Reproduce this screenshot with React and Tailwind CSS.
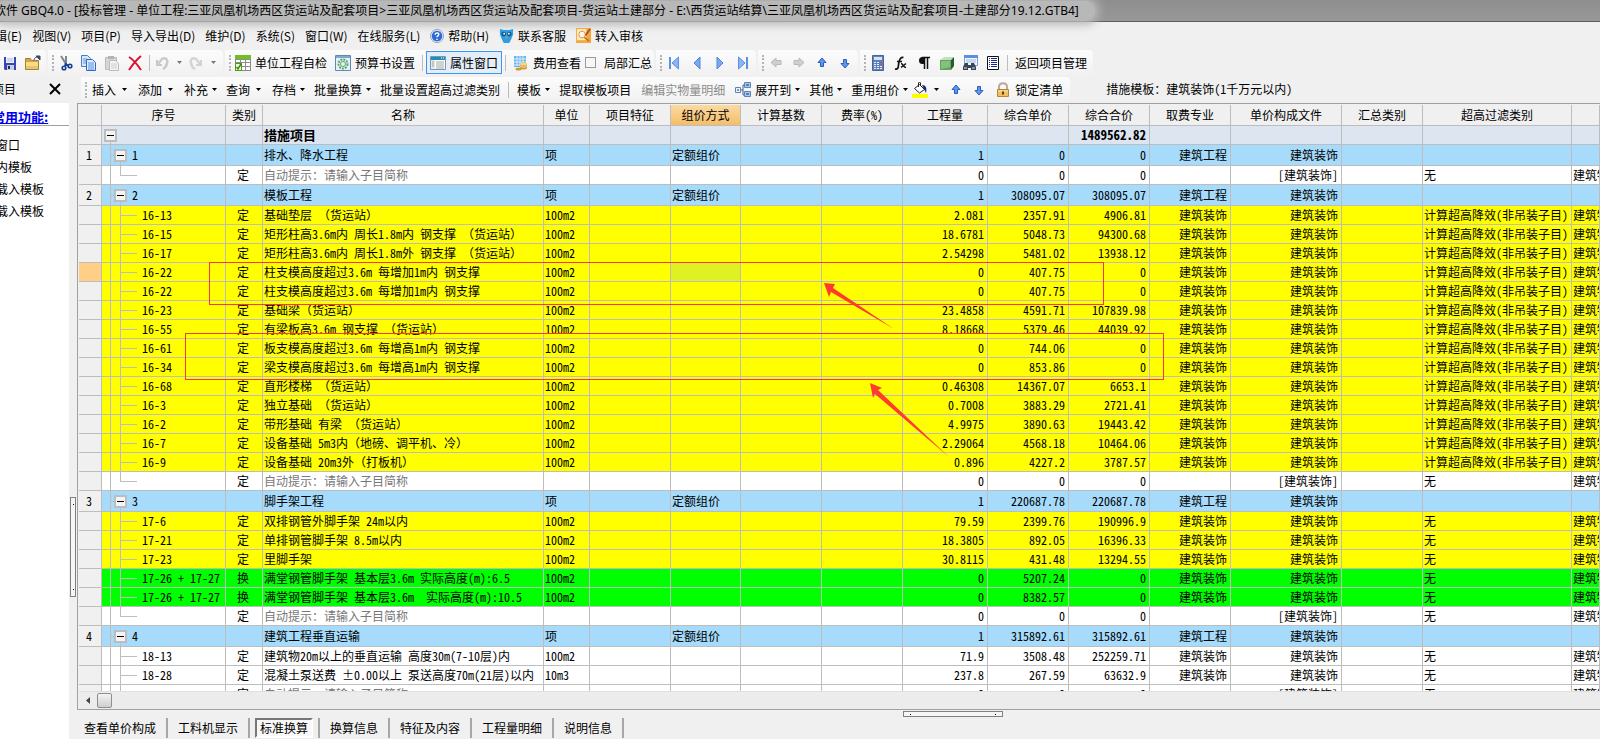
import clsx from "clsx";

const COLUMNS = [
  { key: "no", label: "", width: "w-[23px]", align: "text-center" },
  { key: "code", label: "序号", width: "w-[124px]", align: "text-left" },
  { key: "type", label: "类别", width: "w-[37px]", align: "text-center" },
  { key: "name", label: "名称", width: "w-[281px]", align: "text-left" },
  { key: "unit", label: "单位", width: "w-[46px]", align: "text-left" },
  { key: "feature", label: "项目特征", width: "w-[81px]", align: "text-left" },
  { key: "method", label: "组价方式", width: "w-[70px]", align: "text-left" },
  { key: "base", label: "计算基数", width: "w-[81px]", align: "text-left" },
  { key: "rate", label: "费率(%)", width: "w-[81px]", align: "text-left" },
  { key: "qty", label: "工程量", width: "w-[85px]", align: "text-right" },
  { key: "price", label: "综合单价", width: "w-[81px]", align: "text-right" },
  { key: "total", label: "综合合价", width: "w-[81px]", align: "text-right" },
  { key: "major", label: "取费专业", width: "w-[81px]", align: "text-right" },
  { key: "file", label: "单价构成文件", width: "w-[111px]", align: "text-right" },
  { key: "summary", label: "汇总类别", width: "w-[81px]", align: "text-left" },
  { key: "filter", label: "超高过滤类别", width: "w-[149px]", align: "text-left" },
  { key: "rest", label: "", width: "", align: "text-left" },
];

const HIGH = "计算超高降效(非吊装子目)";

const group = (no, name, price) => ({
  kind: "group", no, code: no, name, unit: "项", method: "定额组价",
  qty: "1", price, total: price, major: "建筑工程", file: "建筑装饰",
});

const item = (code, name, qty, price, total, color, extra) => ({
  kind: "item", code, type: "定", name, unit: "100m2", qty, price, total, color,
  major: "建筑装饰", file: "建筑装饰", filter: HIGH, rest: "建筑物超高", ...extra,
});

const hint = () => ({
  kind: "hint", type: "定", name: "自动提示：请输入子目简称", qty: "0", price: "0",
  total: "0", file: "[建筑装饰]", filter: "无", rest: "建筑物超高",
});

const YELLOW = "bg-[#ffff00]";
const GREEN = "bg-[#00ff00]";
const none = { filter: "无" };

const ROWS = [
  { kind: "root", name: "措施项目", total: "1489562.82" },
  group("1", "排水、降水工程", "0"),
  hint(),
  group("2", "模板工程", "308095.07"),
  item("16-13", "基础垫层 （货运站）", "2.081", "2357.91", "4906.81", YELLOW),
  item("16-15", "矩形柱高3.6m内 周长1.8m内 钢支撑 （货运站）", "18.6781", "5048.73", "94300.68", YELLOW),
  item("16-17", "矩形柱高3.6m内 周长1.8m外 钢支撑 （货运站）", "2.54298", "5481.02", "13938.12", YELLOW),
  item("16-22", "柱支模高度超过3.6m 每增加1m内 钢支撑", "0", "407.75", "0", YELLOW, { selected: true }),
  item("16-22", "柱支模高度超过3.6m 每增加1m内 钢支撑", "0", "407.75", "0", YELLOW),
  item("16-23", "基础梁（货运站）", "23.4858", "4591.71", "107839.98", YELLOW),
  item("16-55", "有梁板高3.6m 钢支撑 （货运站）", "8.18668", "5379.46", "44039.92", YELLOW),
  item("16-61", "板支模高度超过3.6m 每增高1m内 钢支撑", "0", "744.06", "0", YELLOW),
  item("16-34", "梁支模高度超过3.6m 每增高1m内 钢支撑", "0", "853.86", "0", YELLOW),
  item("16-68", "直形楼梯 （货运站）", "0.46308", "14367.07", "6653.1", YELLOW),
  item("16-3", "独立基础 （货运站）", "0.7008", "3883.29", "2721.41", YELLOW),
  item("16-2", "带形基础 有梁 （货运站）", "4.9975", "3890.63", "19443.42", YELLOW),
  item("16-7", "设备基础 5m3内（地磅、调平机、冷）", "2.29064", "4568.18", "10464.06", YELLOW),
  item("16-9", "设备基础 20m3外（打板机）", "0.896", "4227.2", "3787.57", YELLOW),
  hint(),
  group("3", "脚手架工程", "220687.78"),
  item("17-6", "双排钢管外脚手架 24m以内", "79.59", "2399.76", "190996.9", YELLOW, none),
  item("17-21", "单排钢管脚手架 8.5m以内", "18.3805", "892.05", "16396.33", YELLOW, none),
  item("17-23", "里脚手架", "30.8115", "431.48", "13294.55", YELLOW, none),
  item("17-26 + 17-27", "满堂钢管脚手架 基本层3.6m 实际高度(m):6.5", "0", "5207.24", "0", GREEN, { ...none, type: "换" }),
  item("17-26 + 17-27", "满堂钢管脚手架 基本层3.6m  实际高度(m):10.5", "0", "8382.57", "0", GREEN, { ...none, type: "换" }),
  hint(),
  group("4", "建筑工程垂直运输", "315892.61"),
  item("18-13", "建筑物20m以上的垂直运输 高度30m(7-10层)内", "71.9", "3508.48", "252259.71", "bg-white", none),
  item("18-28", "混凝土泵送费 ±0.00以上 泵送高度70m(21层)以内", "237.8", "267.59", "63632.9", "bg-white", { ...none, unit: "10m3" }),
  hint(),
];

/* ---------- icons ---------- */

function Icon({ children, size = 16 }) {
  return (
    <svg width={size} height={size} viewBox="0 0 16 16" fill="none" className="shrink-0" aria-hidden="true">
      {children}
    </svg>
  );
}

const Caret = ({ color = "#000" }) => (
  <svg width="5" height="3" viewBox="0 0 5 3" className="shrink-0" aria-hidden="true">
    <path d="M0 0h5L2.5 3z" fill={color} />
  </svg>
);

const SaveIcon = () => (
  <Icon>
    <path d="M2 2h12v13H3l-1-1z" fill="#3a45b4" />
    <path d="M4 2h8v6H4z" fill="#eef1fb" />
    <path d="M5 4h6M5 6h6" stroke="#b4bede" />
    <path d="M5 10h7v5H5z" fill="#c9cede" />
    <path d="M6 11h2v3H6z" fill="#1c2670" />
  </Icon>
);

const FolderIcon = () => (
  <Icon>
    <path d="M.5 3.500h5l1 2h7v9H.500z" fill="#d9a440" stroke="#a5823c" />
    <path d="M1 7h12v7H1z" fill="#f7dc8a" />
    <path d="M1 11h12v3H1z" fill="#ecc566" />
    <path d="M9 5c0-2 2-3 4-3M11 1h4v4z" stroke="#3c4a68" />
    <path d="M11 1h4v4z" fill="#3c4a68" />
  </Icon>
);

const CutIcon = () => (
  <Icon>
    <path d="M3 1l5 8M8 1L8 9" stroke="#7b8794" strokeWidth="2" />
    <path d="M7 9l4 2M8 8l-1 3" stroke="#173f96" strokeWidth="2" />
    <circle cx="6" cy="13" r="1.800" stroke="#173f96" strokeWidth="1.600" />
    <circle cx="12" cy="11" r="1.800" stroke="#173f96" strokeWidth="1.600" />
  </Icon>
);

const CopyIcon = () => (
  <Icon>
    <path d="M.5.500h6l3 3v8h-9z" fill="#d6e6fb" stroke="#4a7cc8" />
    <path d="M2 4h4M2 6h4M2 8h4" stroke="#6c98d8" />
    <path d="M5.500 4.500h6l3 3v8h-9z" fill="#dcebfd" stroke="#2f68bc" />
    <path d="M7 8h6M7 10h6M7 12h6M7 14h6" stroke="#5f92d8" />
  </Icon>
);

const PasteIcon = () => (
  <Icon>
    <path d="M1.500 2.500h11v12h-11z" fill="#d6d6d6" stroke="#bcbcbc" />
    <path d="M4 1h6v3H4z" fill="#b4b4b4" />
    <path d="M5.500 5.500h6l3 3v7h-9z" fill="#f4f4f4" stroke="#bcbcbc" />
    <path d="M7 9h6M7 11h6M7 13h6" stroke="#cecece" />
  </Icon>
);

const DeleteIcon = () => (
  <Icon>
    <path d="M2 2c5 3 8 7 12 13M14 1C9 5 6 9 2 15" stroke="#d8142c" strokeWidth="2" />
  </Icon>
);

const UndoIcon = () => (
  <Icon>
    <path d="M3 5v5h5" stroke="#c8c8c8" strokeWidth="2" />
    <path d="M4 9l4-5c4-2 6 1 5 4-.5 3-2 5-4 6" stroke="#cacaca" strokeWidth="2.500" />
  </Icon>
);

const RedoIcon = () => (
  <Icon>
    <path d="M13 5v5H8" stroke="#d2d2d2" strokeWidth="2" />
    <path d="M12 9L8 4C4 2 2 5 3 8c.5 3 2 5 4 6" stroke="#d4d4d4" strokeWidth="2.500" />
  </Icon>
);

const CheckTableIcon = () => (
  <Icon>
    <path d="M0 0h16v4H0z" fill="#72bf22" />
    <path d="M0 4h16v12H0z" fill="#8c8c8c" />
    <path d="M1 5h4v2H1zM6 5h4v2H6zM11 5h4v2h-4zM7 8h3v3H7zM11 8h4v3h-4zM7 12h3v3H7zM11 12h4v3h-4z" fill="#fff" />
    <path d="M0 8h7v8H0z" fill="#4f9a18" />
    <path d="M1 9h5v6H1z" fill="#eef8e0" />
    <path d="M1.500 12l1.500 2 3-5" stroke="#3c8c10" strokeWidth="1.500" />
  </Icon>
);

const GearIcon = () => (
  <Icon>
    <path d="M.5.500h15v15H.500z" fill="#e4f0fa" stroke="#5d89b4" />
    <path d="M1 1h14v2H1z" fill="#7ea8d0" />
    <circle cx="8" cy="9" r="4.500" stroke="#62a86a" strokeWidth="2" strokeDasharray="2 1" />
    <circle cx="8" cy="9" r="2.500" stroke="#62a86a" />
  </Icon>
);

const PropIcon = () => (
  <Icon>
    <path d="M.5 1.500h15v13H.500z" fill="#fff" stroke="#7c98b0" />
    <path d="M1 2h14v3H1z" fill="#1f8fb8" />
    <path d="M11 3h1M13 3h1" stroke="#fff" />
    <path d="M1 5h4v9H1z" fill="#e4e8ec" />
    <path d="M2 7h2M2 9h2M2 11h2M6 7h8M6 9h8M6 11h8M6 13h8" stroke="#9aa8a4" />
  </Icon>
);

const CostIcon = () => (
  <Icon>
    <path d="M1 1h12v11H1z" fill="#62b4ea" />
    <path d="M1 4h12M1 7h12M1 10h6M4 1v10M7 1v10M10 1v7" stroke="#dcf0fe" />
    <path d="M7 9c0-2 7-2 7 0v4c0 2-7 2-7 0z" fill="#d69a3c" />
    <path d="M7 11c2 1.500 5 1.500 7 0" stroke="#fbe0a0" />
    <ellipse cx="10.500" cy="9" rx="3.500" ry="1.500" fill="#f8d98a" />
    <ellipse cx="5.500" cy="14" rx="3" ry="1.500" fill="#d6953a" />
  </Icon>
);

const FirstIcon = () => (
  <Icon>
    <path d="M4 2v12" stroke="#5c90e0" strokeWidth="2" />
    <path d="M12.500 2v12L6 8z" fill="#8ab4f4" stroke="#5c90e0" />
  </Icon>
);
const PrevIcon = () => <Icon><path d="M11 2v12L5 8z" fill="#7ba9f0" stroke="#4f86dc" /></Icon>;
const NextIcon = () => <Icon><path d="M5 2v12l6-6z" fill="#7ba9f0" stroke="#4f86dc" /></Icon>;
const LastIcon = () => (
  <Icon>
    <path d="M12 2v12" stroke="#5c90e0" strokeWidth="2" />
    <path d="M3.500 2v12l6.500-6z" fill="#8ab4f4" stroke="#5c90e0" />
  </Icon>
);

const LeftIcon = () => <Icon><path d="M3 7.500L8 3v2.500h5v4H8V12z" fill="#cfcfcf" stroke="#b8b8b8" /></Icon>;
const RightIcon = () => <Icon><path d="M13 7.500L8 3v2.500H3v4h5V12z" fill="#cfcfcf" stroke="#b8b8b8" /></Icon>;
const UpIcon = () => <Icon><path d="M8 3L4 7.500h2.500v4h3v-4H12z" fill="#5c97f4" stroke="#2c5cb8" /></Icon>;
const DownIcon = () => <Icon><path d="M8 13l4-4.500H9.500v-4h-3v4H4z" fill="#5c97f4" stroke="#2c5cb8" /></Icon>;

const CalcIcon = () => (
  <Icon>
    <path d="M2.500.500h11v15h-11z" fill="#5f80bc" stroke="#4a6498" />
    <path d="M4 2h8v3H4z" fill="#cfe4f4" />
    <path d="M4 7h2v1H4zM7 7h2v1H7zM4 9h2v1H4zM7 9h2v1H7zM4 11h2v1H4zM7 11h2v1H7zM4 13h2v1H4zM7 13h2v1H7zM10 11h2v1h-2zM10 13h2v1h-2z" fill="#e8f0fb" />
    <path d="M10 7h2v1h-2zM10 9h2v1h-2z" fill="#e04a3a" />
  </Icon>
);

const FxIcon = () => (
  <Icon>
    <path d="M2 14c4 1 3-3 4-7s2-5 4.500-4.500M4 6.500h5" stroke="#111" strokeWidth="1.700" />
    <path d="M8 8.500c2 0 2 4 5 4M13 8.500l-5 4" stroke="#111" strokeWidth="1.500" />
  </Icon>
);

const PilcrowIcon = () => (
  <Icon>
    <path d="M8.500 2v12M11.500 2v12M6 2.500h8" stroke="#111" strokeWidth="1.500" />
    <path d="M8 2H6.500a3.500 3.500 0 000 7H8z" fill="#111" />
  </Icon>
);

const CubeIcon = () => (
  <Icon>
    <path d="M1 5l4-3h10l-3 3z" fill="#bfe2bc" />
    <path d="M1 5h11v10H1z" fill="#5fa65c" />
    <path d="M12 5l3-3v9l-3 4z" fill="#2a5a30" />
    <path d="M2 6h9v6l-9 2z" fill="#84c07e" />
  </Icon>
);

const FindTableIcon = () => (
  <Icon>
    <path d="M2.500.500h13v10h-13z" fill="#f2f7fd" stroke="#7ba2dc" />
    <path d="M2 0h14v3H2z" fill="#5a90e0" />
    <path d="M4 5h10M4 7h10" stroke="#9ab6dc" />
    <path d="M3 8h3v2h3V8h3l2 4v3H9v-2H6v2H1v-3z" fill="#3a4452" />
    <path d="M2 12h3v2H2zM10 12h3v2h-3z" fill="#7e93b0" />
  </Icon>
);

const ListIcon = () => (
  <Icon>
    <path d="M2.500 1.500h11v13h-11z" fill="#fff" stroke="#111" />
    <path d="M4 3.500h1M4 5.500h1M4 7.500h1M4 9.500h1M4 11.500h1M6 3.500h6M6 5.500h6M6 7.500h6M6 9.500h6M6 11.500h6" stroke="#1a2390" />
  </Icon>
);

const HelpIcon = () => (
  <Icon size={14}>
    <circle cx="8" cy="8" r="7.500" fill="#dfe5f0" stroke="#8f9db4" />
    <circle cx="8" cy="8" r="6" fill="#2f68d8" />
    <path d="M6 6.500c0-3 4.500-2.500 4 0C9.700 8 8 7.800 8 9.500M8 11v1.500" stroke="#fff" strokeWidth="1.700" />
  </Icon>
);

const ServiceIcon = () => (
  <Icon size={15}>
    <path d="M1 1l4 1h6l4-1v6l-2 5-2 4H5l-2-4-2-5z" fill="#2c9fe4" />
    <circle cx="5" cy="6.500" r="2.500" fill="#12598c" />
    <circle cx="11" cy="6.500" r="2.500" fill="#12598c" />
    <circle cx="5.500" cy="6" r="1" fill="#fff" />
    <circle cx="10.500" cy="6" r="1" fill="#fff" />
    <path d="M7 9h2v2H7z" fill="#f08040" />
  </Icon>
);

const AuditIcon = () => (
  <Icon size={15}>
    <path d="M0 0h16v16H0z" fill="#f4a83c" />
    <path d="M1 1h10v12H1z" fill="#fbe9c4" />
    <circle cx="6.500" cy="7" r="3.500" fill="#fffaf0" stroke="#d89040" />
    <path d="M9 10l5 4" stroke="#c87020" strokeWidth="2" />
    <path d="M15 1l-5 7" stroke="#b0501c" strokeWidth="2" />
  </Icon>
);

const ExpandIcon = () => (
  <Icon>
    <path d="M6 8h2M8 3v10M8 3h2M8 13h2" stroke="#44608c" />
    <path d="M.5 5.500h5v5h-5z" fill="#eef4fc" stroke="#5c82bc" />
    <path d="M9.500.500h6v5h-6zM9.500 9.500h6v5h-6z" fill="#a8c8f4" stroke="#5c82bc" />
    <path d="M2 8h2M11 3h3M11 12h3" stroke="#17356c" />
  </Icon>
);

const FillIcon = () => (
  <Icon>
    <path d="M0 12h16v4H0z" fill="#ffff00" />
    <path d="M2.500 6.500l5-4 5 5-5 3.500z" fill="#fff" stroke="#222" />
    <path d="M6.500 5V1c0-1 2-1 2 0v3" stroke="#222" />
    <path d="M10 3c4 0 5 3 4 8l-2-4z" fill="#1a2a80" />
  </Icon>
);

const LockIcon = () => (
  <Icon>
    <path d="M4 8V5c0-5 8-5 8 0v3" stroke="#b4ac98" strokeWidth="2" />
    <path d="M2.500 7.500h11v7h-11z" fill="#f0c060" stroke="#b8862e" />
    <path d="M3 9h10" stroke="#fae4ae" />
    <path d="M8 9.500v3" stroke="#5c3c08" strokeWidth="2" />
  </Icon>
);

/* ---------- toolbar parts ---------- */

function Segment({ children, grip = true }) {
  return (
    <div className="flex h-[25px] items-center rounded-r bg-linear-to-b from-[#fcfcfc] to-[#f1f1f1] pr-0.5">
      {grip && <span className="ml-1 h-4 border-l-2 border-dotted border-[#b4b4b4]" />}
      {children}
    </div>
  );
}

const IconButton = ({ label, children }) => (
  <button type="button" aria-label={label} className="flex h-6 w-[23px] shrink-0 items-center justify-center">
    {children}
  </button>
);

const CaretButton = ({ label, color }) => (
  <button type="button" aria-label={label} className="flex h-6 w-4 shrink-0 items-center justify-center">
    <Caret color={color} />
  </button>
);

const TextButton = ({ icon, active, children }) => (
  <button
    type="button"
    className={clsx(
      "flex h-[23px] items-center gap-1 px-[3px] whitespace-nowrap border",
      active ? "border-[#3c96f0] bg-[#e3eefa]" : "border-transparent"
    )}
  >
    {icon}
    {children}
  </button>
);

const MenuButton = ({ icon, menu, disabled, children }) => (
  <button
    type="button"
    disabled={disabled}
    className={clsx("flex h-6 items-center gap-1 pl-[5px] whitespace-nowrap", menu ? "pr-1" : "pr-[5px]", disabled && "text-[#8c8c8c]")}
  >
    {icon}
    {children}
    {menu && <Caret />}
  </button>
);

const SplitButton = ({ children }) => (
  <div className="flex items-center">
    <button type="button" className="h-6 pl-[5px] whitespace-nowrap">{children}</button>
    <button type="button" aria-label={`${children}选项`} className="flex h-6 w-[17px] items-center justify-center">
      <Caret />
    </button>
  </div>
);

const Divider = () => <span className="mx-[3px] h-4 w-px bg-[#bdbdbd]" />;

function MenuBar() {
  const items = [
    { label: "编辑(E)" },
    { label: "视图(V)" },
    { label: "项目(P)" },
    { label: "导入导出(D)" },
    { label: "维护(D)" },
    { label: "系统(S)" },
    { label: "窗口(W)" },
    { label: "在线服务(L)" },
    { label: "帮助(H)", icon: <HelpIcon /> },
    { label: "联系客服", icon: <ServiceIcon /> },
    { label: "转入审核", icon: <AuditIcon /> },
  ];
  return (
    <nav className="-ml-[17px] flex h-[27px] shrink-0 items-center gap-x-[10px]">
      {items.map((it) => (
        <button key={it.label} type="button" className="flex items-center gap-1 whitespace-nowrap">
          {it.icon}
          {it.label}
        </button>
      ))}
    </nav>
  );
}

function MainToolbar() {
  return (
    <div className="mt-px mb-0.5 flex shrink-0 gap-0.5">
      <div className="-ml-0.5">
        <Segment grip={false}>
          <IconButton label="保存"><SaveIcon /></IconButton>
          <IconButton label="打开"><FolderIcon /></IconButton>
        </Segment>
      </div>
      <Segment>
        <IconButton label="剪切"><CutIcon /></IconButton>
        <IconButton label="复制"><CopyIcon /></IconButton>
        <IconButton label="粘贴"><PasteIcon /></IconButton>
        <IconButton label="删除"><DeleteIcon /></IconButton>
        <Divider />
        <button type="button" aria-label="撤销" className="px-px"><UndoIcon /></button>
        <CaretButton label="撤销列表" color="#777" />
        <button type="button" aria-label="恢复" className="px-px"><RedoIcon /></button>
        <CaretButton label="恢复列表" color="#777" />
      </Segment>
      <Segment>
        <TextButton icon={<CheckTableIcon />}>单位工程自检</TextButton>
        <TextButton icon={<GearIcon />}>预算书设置</TextButton>
        <Divider />
        <TextButton icon={<PropIcon />} active>属性窗口</TextButton>
        <Divider />
        <TextButton icon={<CostIcon />}>费用查看</TextButton>
        <label className="flex items-center gap-2 whitespace-nowrap">
          <input type="checkbox" className="size-[11px] appearance-none border border-[#9a9a9a] bg-[#f6f6f6]" />
          局部汇总
        </label>
      </Segment>
      <Segment>
        <IconButton label="第一条"><FirstIcon /></IconButton>
        <IconButton label="上一条"><PrevIcon /></IconButton>
        <IconButton label="下一条"><NextIcon /></IconButton>
        <IconButton label="最后一条"><LastIcon /></IconButton>
      </Segment>
      <Segment>
        <IconButton label="升级"><LeftIcon /></IconButton>
        <IconButton label="降级"><RightIcon /></IconButton>
        <IconButton label="上移"><UpIcon /></IconButton>
        <IconButton label="下移"><DownIcon /></IconButton>
      </Segment>
      <Segment>
        <IconButton label="计算器"><CalcIcon /></IconButton>
        <IconButton label="函数"><FxIcon /></IconButton>
        <IconButton label="特殊符号"><PilcrowIcon /></IconButton>
        <IconButton label="图元"><CubeIcon /></IconButton>
        <IconButton label="查找"><FindTableIcon /></IconButton>
        <IconButton label="列表"><ListIcon /></IconButton>
        <Divider />
        <TextButton>返回项目管理</TextButton>
      </Segment>
    </div>
  );
}

function EditToolbar() {
  return (
    <div className="flex h-[26px] shrink-0 items-start pl-1">
      <Segment>
        <SplitButton>插入</SplitButton>
        <SplitButton>添加</SplitButton>
        <MenuButton menu>补充</MenuButton>
        <SplitButton>查询</SplitButton>
        <MenuButton menu>存档</MenuButton>
        <MenuButton menu>批量换算</MenuButton>
        <MenuButton>批量设置超高过滤类别</MenuButton>
        <Divider />
        <MenuButton menu>模板</MenuButton>
        <MenuButton>提取模板项目</MenuButton>
        <MenuButton disabled>编辑实物量明细</MenuButton>
        <MenuButton menu icon={<ExpandIcon />}>展开到</MenuButton>
        <MenuButton menu>其他</MenuButton>
        <MenuButton menu>重用组价</MenuButton>
        <button type="button" aria-label="填充颜色"><FillIcon /></button>
        <CaretButton label="颜色列表" />
        <IconButton label="上移"><UpIcon /></IconButton>
        <IconButton label="下移"><DownIcon /></IconButton>
        <MenuButton icon={<LockIcon />}>锁定清单</MenuButton>
      </Segment>
      <p className="ml-9 leading-6 whitespace-nowrap font-['Noto_Sans_Mono_CJK_SC','Liberation_Mono','Noto_Sans_CJK_SC',monospace]">
        措施模板：建筑装饰(1千万元以内)
      </p>
    </div>
  );
}

/* ---------- grid ---------- */

const Expander = ({ label }) => (
  <button
    type="button"
    aria-label={label}
    className="flex size-[13px] shrink-0 items-center justify-center border-2 border-[#bdbdbd] bg-[#f4f4f4]"
  >
    <span className="h-px w-[7px] bg-black" />
  </button>
);

function TreeCell({ row }) {
  if (row.kind === "root") {
    return (
      <div className="flex h-[18px] flex-col pl-0.5">
        <span className="h-[3px]" />
        <Expander label="折叠全部" />
        <span className="ml-1.5 flex-1 border-l border-[#bdbdbd]" />
      </div>
    );
  }
  if (row.kind === "group") {
    return (
      <div className="flex h-5 pl-2">
        <span className="flex w-1 items-center border-l border-[#bdbdbd]">
          <span className="h-px flex-1 bg-[#bdbdbd]" />
        </span>
        <span className="flex w-[18px] flex-col">
          <span className="h-1" />
          <Expander label={`折叠${row.name}`} />
          <span className="ml-1.5 flex-1 border-l border-[#bdbdbd]" />
        </span>
        <span className="leading-5">{row.code}</span>
      </div>
    );
  }
  const last = row.kind === "hint";
  return (
    <div className="flex h-[18px] pl-2">
      <span className="w-[10px] border-l border-[#bdbdbd]" />
      {last ? (
        <span className="h-[10px] w-[17px] border-b border-l border-[#bdbdbd]" />
      ) : (
        <span className="flex w-[17px] items-center border-l border-[#bdbdbd]">
          <span className="h-px flex-1 bg-[#bdbdbd]" />
        </span>
      )}
      <span className="pl-[5px] leading-[18px] whitespace-nowrap">{row.code}</span>
    </div>
  );
}

function rowColor(row) {
  if (row.kind === "root") return "bg-[#dde6f0]";
  if (row.kind === "group") return "bg-[#a6dbfc]";
  return row.color || "bg-white";
}

function cellColor(row, col) {
  if (col.key === "no") return row.selected ? "bg-[#ffcf86]" : "bg-[#f0f0f0]";
  if (col.key === "method" && row.selected) return "bg-[#dff023]";
  return "";
}

function BudgetTable() {
  return (
    <table className="w-full table-fixed border-separate border-spacing-0">
      <thead>
        <tr>
          {COLUMNS.map((col) => (
            <th
              key={col.key}
              className={clsx(
                "h-[21px] overflow-hidden border-r border-b border-[#bdbdbd] p-0 text-center leading-5 font-normal whitespace-nowrap",
                col.width,
                col.key === "method" ? "bg-linear-to-b from-[#fbdaa2] to-[#f4be66]" : "bg-[#f0f0f0]"
              )}
            >
              {col.label}
            </th>
          ))}
        </tr>
      </thead>
      <tbody>
        {ROWS.map((row, i) => (
          <tr key={i} className={rowColor(row)}>
            {COLUMNS.map((col) => (
              <td
                key={col.key}
                className={clsx(
                  "overflow-hidden border-r border-b border-[#bdbdbd] py-0 whitespace-pre",
                  col.align,
                  row.kind === "group" ? "h-[21px] leading-5" : "h-[19px] leading-[18px]",
                  col.key === "code" ? "px-0" : "pr-[3px] pl-px",
                  row.kind === "hint" && col.key === "name" && "text-[#777]",
                  row.kind === "root" && "text-[13px] font-bold",
                  cellColor(row, col)
                )}
              >
                {col.key === "code" ? <TreeCell row={row} /> : row[col.key]}
              </td>
            ))}
          </tr>
        ))}
      </tbody>
    </table>
  );
}

// red review marks drawn over the grid
function Marks() {
  return (
    <svg width="1100" height="380" className="pointer-events-none absolute top-0 left-0" aria-hidden="true">
      <g fill="none" stroke="#ff3333">
        <rect x="130.500" y="157.500" width="894" height="42" />
        <rect x="106.500" y="228.500" width="978" height="46" />
      </g>
      <g fill="#ff3b30">
        <path d="M745 178l11 1-2 4 61 41-63-37-2 5z" />
        <path d="M791 278l12 5-4 2 71 67-74-63-2 4z" />
      </g>
    </svg>
  );
}

function DetailTabs() {
  const tabs = ["查看单价构成", "工料机显示", "标准换算", "换算信息", "特征及内容", "工程量明细", "说明信息"];
  return (
    <div role="tablist" className="-ml-[3px] flex h-5 shrink-0 items-stretch">
      {tabs.map((tab) => {
        const active = tab === "标准换算";
        return (
          <div key={tab} className={clsx("flex border-r-2 border-[#a6a6a6]", active ? "px-[5px]" : "px-[10px]")}>
            <button
              type="button"
              role="tab"
              aria-selected={active}
              className={clsx(
                "whitespace-nowrap",
                active
                  ? "border-2 border-t-[#777] border-r-[#fff] border-b-[#fff] border-l-[#777] bg-[#f8f8f8] px-[3px] leading-4"
                  : "leading-5"
              )}
            >
              {tab}
            </button>
          </div>
        );
      })}
    </div>
  );
}

function SidePanel() {
  return (
    <aside className="flex w-[69px] shrink-0 flex-col overflow-hidden">
      <div className="flex h-[26px] shrink-0 items-center justify-between pr-2 pb-0.5">
        <h2 className="-ml-2 whitespace-nowrap">项目</h2>
        <button type="button" aria-label="关闭">
          <svg width="12" height="12" viewBox="0 0 12 12" aria-hidden="true">
            <path d="M1 1l10 10M11 1L1 11" stroke="#000" strokeWidth="2" />
          </svg>
        </button>
      </div>
      <div className="flex-1 bg-white">
        <h3 className="border-b border-[#a0a0a0] pt-1.5">
          <a href="#common" className="-ml-2 block text-[13px] leading-4 font-bold whitespace-nowrap text-[#0000ee] underline">
            常用功能:
          </a>
        </h3>
        <ul className="pt-2">
          {["窗口", "内模板", "载入模板", "载入模板"].map((t, i) => (
            <li key={i} className="h-[22px]">
              <a href="#task" className="-ml-1 block leading-[22px] whitespace-nowrap">{t}</a>
            </li>
          ))}
        </ul>
      </div>
    </aside>
  );
}

export default function App() {
  return (
    <div className="flex h-screen flex-col overflow-hidden bg-[#f0f0f0] font-['Noto_Sans_CJK_SC','Liberation_Sans',sans-serif] text-[12px] leading-4 text-black">
      <header className="flex h-[22px] shrink-0 items-center border-b border-[#5c5c5c] bg-linear-to-b from-[#8e8e8e] to-[#989898]">
        <h1 className="-ml-1.5 rounded-full bg-[#b8b8b8] pr-4 font-['Noto_Sans','Noto_Sans_CJK_SC',sans-serif] text-[12px] leading-5 whitespace-nowrap shadow-[0_0_8px_4px_#b8b8b8]">
          软件 GBQ4.0 - [投标管理 - 单位工程:三亚凤凰机场西区货运站及配套项目&gt;三亚凤凰机场西区货运站及配套项目-货运站土建部分 - E:\西货运站结算\三亚凤凰机场西区货运站及配套项目-土建部分19.12.GTB4]
        </h1>
      </header>
      <MenuBar />
      <MainToolbar />
      <div className="flex min-h-0 flex-1">
        <SidePanel />
        <div className="w-2 shrink-0 px-px pt-[420px]">
          <div className="flex h-[100px] flex-col items-center justify-between border border-[#808080] bg-[#f6f6f6] py-1.5">
            <span className="size-px bg-[#000080]" />
            <span className="size-px bg-[#000080]" />
          </div>
        </div>
        <main className="flex min-w-0 flex-1 flex-col">
          <EditToolbar />
          <section className="flex min-h-0 flex-1 flex-col border-y border-l border-[#a0a0a0] bg-[#f0f0f0] pt-px pl-px">
            <div className="relative min-h-0 flex-1 overflow-hidden font-['Noto_Sans_Mono_CJK_SC','Liberation_Mono','Noto_Sans_CJK_SC',monospace]">
              <BudgetTable />
              <Marks />
            </div>
            <div className="flex h-[18px] shrink-0 items-center border-t border-[#e0e0e0] bg-[#ececec]">
              <button type="button" aria-label="向左滚动" className="flex h-4 w-[18px] items-center justify-center">
                <svg width="4" height="7" viewBox="0 0 4 7" aria-hidden="true">
                  <path d="M4 0v7L0 3.500z" fill="#444" />
                </svg>
              </button>
              <button
                type="button"
                aria-label="水平滚动条"
                className="h-[15px] w-[15px] rounded-xs border border-[#8f8f8f] bg-linear-to-b from-[#f4f4f4] to-[#cfcfcf]"
              />
            </div>
          </section>
          <div className="flex h-2 shrink-0 pt-px">
            <div className="ml-[826px] flex h-1.5 w-[100px] items-center justify-between border border-[#808080] bg-[#f6f6f6] px-1.5">
              <span className="size-px bg-[#000080]" />
              <span className="size-px bg-[#000080]" />
            </div>
          </div>
          <DetailTabs />
          <div className="h-px shrink-0" />
        </main>
      </div>
    </div>
  );
}
